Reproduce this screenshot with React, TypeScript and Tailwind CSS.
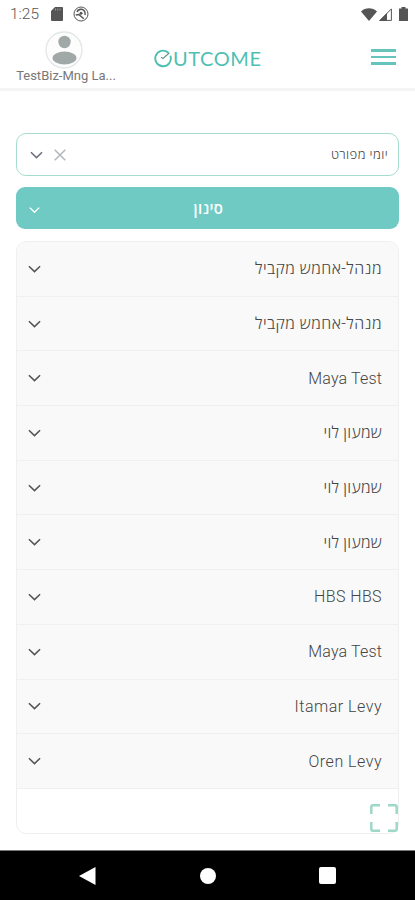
import clsx from 'clsx';

const hebrew = 'text-[16px] font-light pt-px';
const latin = 'text-base font-light pt-px';

const rows = [
  { id: 1, name: 'מנהל-אחמש מקביל', className: clsx(hebrew, 'tracking-[0.46px]') },
  { id: 2, name: 'מנהל-אחמש מקביל', className: clsx(hebrew, 'tracking-[0.46px]') },
  { id: 3, name: 'Maya Test', className: clsx(latin, 'tracking-[0.16px]') },
  { id: 4, name: 'שמעון לוי', className: clsx(hebrew, 'tracking-[0.26px]') },
  { id: 5, name: 'שמעון לוי', className: clsx(hebrew, 'tracking-[0.26px]') },
  { id: 6, name: 'שמעון לוי', className: clsx(hebrew, 'tracking-[0.26px]') },
  { id: 7, name: 'HBS HBS', className: clsx(latin, 'tracking-[0.4px]') },
  { id: 8, name: 'Maya Test', className: clsx(latin, 'tracking-[0.16px]') },
  { id: 9, name: 'Itamar Levy', className: clsx(latin, 'tracking-[0.5px]') },
  { id: 10, name: 'Oren Levy', className: clsx(latin, 'tracking-[0.5px]') },
];

function Chevron({ className, width = 'w-[13px]' }: { className?: string; width?: string }) {
  return (
    <svg viewBox="0 0 14 8" className={clsx('h-2 shrink-0', width, className)} fill="none" stroke="currentColor" strokeWidth="1.7">
      <path d="M1 1l6 5.8L13 1" />
    </svg>
  );
}

function StatusBar() {
  return (
    <div className="flex h-7 items-center justify-between pl-[10px] pr-[7px] text-[#555]">
      <div className="flex items-center">
        <span className="w-[41px] pt-px text-[15.5px] font-light text-[#555] font-['Roboto',sans-serif]">1:25</span>
        <svg viewBox="0 0 12 14" className="h-3.5 w-3" fill="currentColor">
          <path d="M4 0h7a1 1 0 0 1 1 1v12a1 1 0 0 1-1 1H1a1 1 0 0 1-1-1V4z" />
          <path d="M4.5 1.5v2M6.7 1.5v2M9 1.5v2" stroke="#aaa" strokeWidth=".8" />
        </svg>
        <svg viewBox="0 0 16 16" className="ml-[10px] h-4 w-4" fill="none" stroke="currentColor">
          <circle cx="8" cy="8" r="7" strokeWidth="1" />
          <path d="M4 6C5 3 9 2.500 11 4.500c1.300 1.400 1.500 3 1 4.500" strokeWidth="1.600" />
          <path d="M2.800 9l3-.5 5 4.300" strokeWidth="1.500" />
          <circle cx="8" cy="7.300" r="1.500" fill="currentColor" stroke="none" />
        </svg>
      </div>
      <div className="flex items-center">
        <svg viewBox="0 0 16 13" className="h-[13px] w-4" fill="currentColor">
          <path d="M0 3.500C4.500-.8 11.500-.8 16 3.500L8 13z" />
        </svg>
        <svg viewBox="0 0 13 13" className="ml-0.5 h-[13px] w-[13px]">
          <path d="M12.400.9v11.500H.9z" fill="none" stroke="currentColor" strokeWidth="1" />
          <path d="M8 5v8H0z" fill="currentColor" />
        </svg>
        <svg viewBox="0 0 9 14" className="ml-[7px] h-3.5 w-[9px]" fill="currentColor">
          <path d="M2.500 0h4v1.500H9V14H0V1.500h2.500z" />
        </svg>
      </div>
    </div>
  );
}

function Logo() {
  return (
    <div className="mt-5 flex h-5 w-[115px] items-center text-[#4fbfb3]">
      <svg viewBox="0 0 18 20" className="h-5 w-[18px] shrink-0" fill="none" strokeLinecap="round">
        <path d="M14 4.400A7.800 7.800 0 1 0 16.600 8.400" stroke="currentColor" strokeWidth="1.900" />
        <path d="M7.500 9.500l1.500 1 6-5.300" stroke="#6b9c8f" strokeWidth="1.300" />
      </svg>
      <span className="ml-px whitespace-nowrap text-[20px] leading-5 tracking-[0.6px] font-['Lato',sans-serif]">UTCOME</span>
    </div>
  );
}

function Header() {
  return (
    <header className="flex h-[63px] items-start border-b-[3px] border-[#f4f4f4] pl-4 pr-[19px]">
      <div className="flex w-[100px] flex-col items-center pt-[3px]">
        <svg viewBox="0 0 38 38" className="ml-[-4px] h-[38px] w-[38px]">
          <circle cx="19" cy="19" r="18" fill="#fdfdfd" stroke="#e3e7e7" strokeWidth="1.300" />
          <circle cx="19.500" cy="11" r="6.200" fill="#a1a9a8" />
          <ellipse cx="19.500" cy="27" rx="12" ry="6.500" fill="#a1a9a8" />
        </svg>
        <span className="mt-[-1px] whitespace-nowrap text-[13px] leading-4 text-[#777] font-['Roboto',sans-serif]">
          TestBiz-Mng La...
        </span>
      </div>
      <div className="ml-[38px]">
        <Logo />
      </div>
      <button className="ml-auto mt-[21px] flex flex-col items-end gap-[4px]" aria-label="Menu">
        <span className="h-[2.500px] w-[25px] bg-[#67c4bc]" />
        <span className="h-[2.500px] w-[25px] bg-[#67c4bc]" />
        <span className="h-[2.500px] w-[25px] bg-[#67c4bc]" />
      </button>
    </header>
  );
}

function NavBar() {
  return (
    <nav className="flex h-[50px] items-center justify-between border-t border-[#777] bg-black pl-[79px] pr-[79px]">
      <svg viewBox="0 0 17 18" className="h-[18px] w-[17px]" fill="white">
        <path d="M16.500 0v18L0 9z" />
      </svg>
      <span className="h-4 w-4 rounded-full bg-white" />
      <span className="h-[17px] w-[17px] rounded-[2px] bg-white" />
    </nav>
  );
}

export default function App() {
  return (
    <div className="flex h-[900px] w-[415px] flex-col overflow-hidden bg-white font-['Open_Sans',sans-serif]">
      <StatusBar />
      <Header />

      <main className="relative flex flex-1 flex-col px-4 pt-[42px]">
        <div className="flex h-[43px] items-center rounded-[10px] border-[1.500px] border-[#a5dccf] pl-[13px] pr-[10px]">
          <Chevron className="text-[#6f6f7d]" />
          <svg viewBox="0 0 12 12" className="ml-[11px] h-3 w-3" fill="none" stroke="#b4b7ba" strokeWidth="1.500">
            <path d="M.7.7l10.600 10.600M11.300.7L.7 11.300" />
          </svg>
          <span dir="rtl" className="ml-auto text-[13px] font-light tracking-[0.4px] text-[#444]">יומי מפורט</span>
        </div>

        <button className="mt-[11px] flex h-[42px] shrink-0 items-center rounded-[9px] bg-[#6fcac4] pl-[13px] pr-[22px] text-white">
          <Chevron width="w-[11px]" className="mt-[3px] text-white" />
          <span className="flex-1 text-center text-[15px] font-semibold tracking-[0.4px]">סינון</span>
        </button>

        <div className="mt-3 flex h-[593px] flex-col overflow-hidden rounded-[10px] border border-[#eeefef]">
          {rows.map((row) => (
            <div
              key={row.id}
              className="flex h-[54.700px] shrink-0 items-center justify-between border-b border-[#eff1f1] bg-[#f9f9f9] pl-[11px] pr-4"
            >
              <Chevron className="text-[#555]" />
              <span dir="auto" className={clsx("whitespace-nowrap text-[#444] font-['Roboto','Open_Sans',sans-serif]", row.className)}>
                {row.name}
              </span>
            </div>
          ))}
        </div>

        <svg
          viewBox="0 0 28 28"
          className="absolute bottom-[18px] right-[17px] h-7 w-7"
          fill="none"
          stroke="#9ed8c8"
          strokeWidth="2.500"
        >
          <path d="M1.300 10V3q0-1.700 1.700-1.700h7M18 1.300h7q1.700 0 1.700 1.700v7M26.700 18v7q0 1.700-1.700 1.700h-7M10 26.700H3q-1.700 0-1.700-1.700v-7" />
        </svg>
      </main>

      <NavBar />
    </div>
  );
}
